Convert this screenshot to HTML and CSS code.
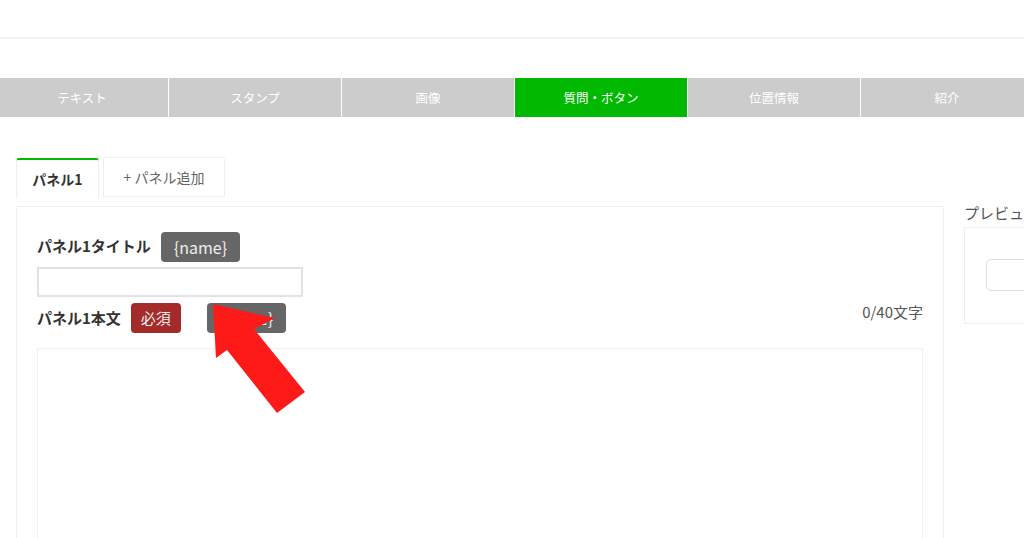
FILE: index.html
```html
<!DOCTYPE html>
<html lang="ja">
<head>
    <meta charset="UTF-8">
    <meta name="viewport" content="width=device-width, initial-scale=1.0">
    <title>質問・ボタン</title>
    <link rel="stylesheet" href="styles.css">
</head>
<body>
    <div class="page">
        <!-- ヘッダー -->
        <div class="header"></div>

        <!-- メッセージ種別タブ -->
        <ul class="type-tabs">
            <li>テキスト</li>
            <li>スタンプ</li>
            <li>画像</li>
            <li class="active">質問・ボタン</li>
            <li>位置情報</li>
            <li>紹介</li>
        </ul>

        <div class="content">
            <div class="editor">
                <!-- パネルタブ -->
                <div class="panel-tabs">
                    <span class="panel-tab active">パネル1</span>
                    <span class="panel-tab add">+ パネル追加</span>
                </div>

                <div class="panel">
                    <div class="field-head">
                        <span class="field-label">パネル1タイトル</span>
                        <span class="badge">{name}</span>
                    </div>
                    <input class="text-input" type="text">

                    <div class="field-head body-head">
                        <span class="field-label">パネル1本文</span>
                        <span class="badge required">必須</span>
                        <span class="badge badge-gap">{name}</span>
                        <span class="count">0/40文字</span>
                    </div>
                    <div class="text-area"></div>
                </div>
            </div>

            <!-- プレビュー -->
            <div class="preview">
                <p class="preview-title">プレビュー</p>
                <div class="preview-box">
                    <div class="preview-input"></div>
                </div>
            </div>
        </div>

        <!-- 注目の矢印 -->
        <svg class="arrow" width="110" height="120" viewBox="0 0 110 120">
            <polygon points="8,4 70,18 49,29 100,92 72,113 22,50 11,58" fill="#ff1a1a"/>
        </svg>
    </div>
</body>
</html>
```

FILE: styles.css
```css
* {
    margin: 0;
    padding: 0;
    box-sizing: border-box;
}
ul {
    list-style: none;
}
html,
body {
    height: 100%;
    overflow: hidden;
}
body {
    font-family: "Noto Sans CJK JP", "Noto Sans", sans-serif;
    color: #333;
    background: #fff;
}

.page {
    position: relative;
    width: 1024px;
}
.header {
    height: 39px;
    border-bottom: 2px solid #f3f3f3;
}

.type-tabs {
    display: grid;
    grid-template-columns: repeat(6, 172px);
    gap: 1px;
    margin-top: 39px;
    margin-left: -4px;
    width: 1037px;
    height: 39px;
}
.type-tabs li {
    background: #cccccc;
    color: #fff;
    font-size: 12.5px;
    line-height: 39px;
    text-align: center;
}
.type-tabs li.active {
    background: #00b900;
}

.content {
    display: flex;
    gap: 20px;
    padding-left: 16px;
    margin-top: 40px;
}
.editor {
    flex: 0 0 928px;
}

.panel-tabs {
    display: flex;
    align-items: flex-start;
    gap: 4px;
}
.panel-tab {
    height: 40px;
    font-size: 14px;
    line-height: 38px;
    text-align: center;
    border: 1px solid #eee;
    border-bottom: none;
    border-radius: 3px 3px 0 0;
    background: #fff;
}
.panel-tab.active {
    margin-top: 1px;
    width: 83px;
    font-weight: bold;
    color: #333;
    border-top: 2px solid #00b900;
}
.panel-tab.add {
    width: 122px;
    color: #666;
    border-bottom: 1px solid #eee;
}

.panel {
    margin-top: 8px;
    height: 340px;
    padding: 25px 20px 0;
    border: 1px solid #f0f0f0;
}
.field-head {
    display: flex;
    align-items: center;
    gap: 10px;
}
.field-label {
    font-size: 15px;
    font-weight: bold;
    color: #333;
    margin-top: -4px;
}
.badge {
    height: 30px;
    padding: 0 13px;
    font-size: 16px;
    line-height: 30px;
    color: #eee;
    background: #666;
    border-radius: 4px;
}
.badge.required {
    padding: 0 10px;
    font-size: 15px;
    background: #a52a2a;
}
.badge-gap {
    margin-left: 16px;
}
.text-input {
    display: block;
    margin-top: 5px;
    width: 266px;
    height: 30px;
    border: 2px solid #e2e2e2;
    outline: none;
}
.body-head {
    margin-top: 6px;
}
.body-head .field-label {
    margin-top: -2px;
}
.count {
    margin-left: auto;
    align-self: flex-start;
    font-size: 15px;
    line-height: 18px;
    color: #555;
}
.text-area {
    margin-top: 15px;
    height: 220px;
    border: 1px solid #f0f0f0;
}

.preview {
    flex: 0 0 200px;
    padding-top: 47px;
}
.preview-title {
    font-size: 15px;
    line-height: 18px;
    color: #555;
}
.preview-box {
    margin-top: 5px;
    height: 97px;
    padding: 31px 0 0 21px;
    border: 1px solid #eee;
}
.preview-input {
    height: 32px;
    border: 1px solid #ddd;
    border-radius: 5px;
}

.arrow {
    position: absolute;
    left: 205px;
    top: 300px;
    pointer-events: none;
}
```
